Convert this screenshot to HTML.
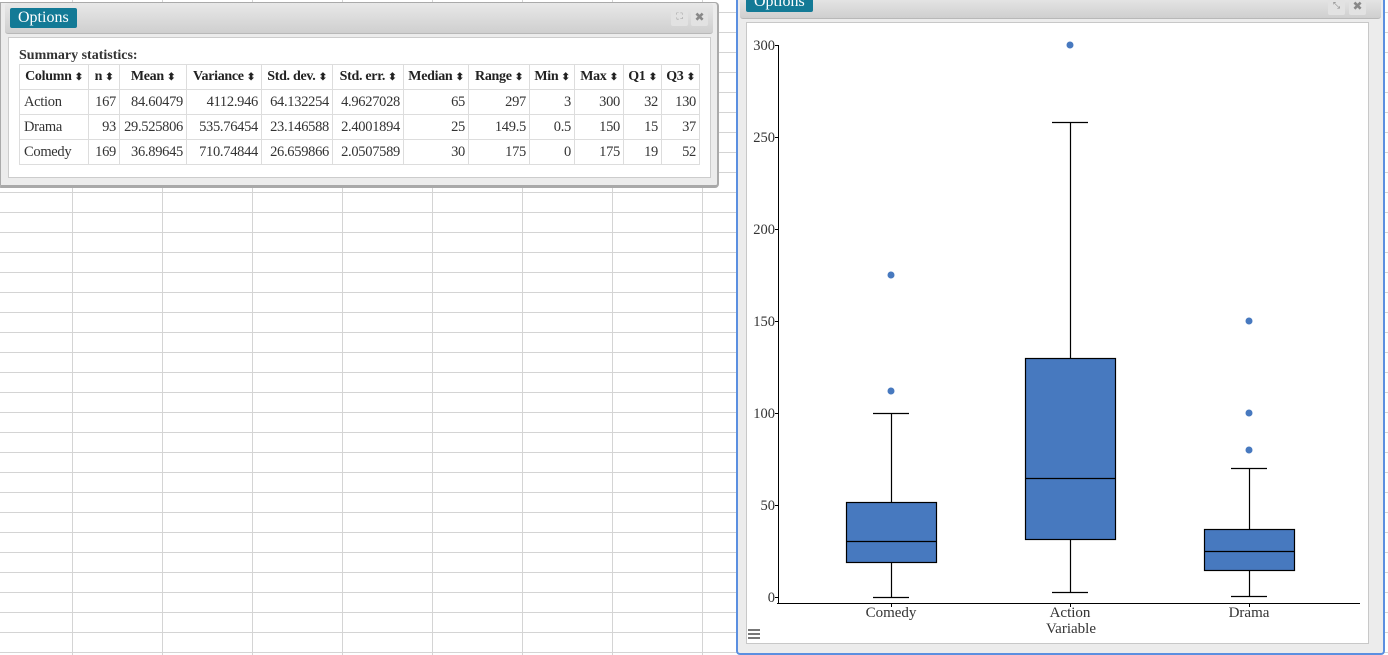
<!DOCTYPE html>
<html><head><style>
body{margin:0;width:1388px;height:655px;overflow:hidden;position:relative;background:#fff;font-family:"Liberation Serif",serif;}
.grid{position:absolute;left:0;top:0;width:1388px;height:655px;
background-image:linear-gradient(to bottom,transparent 12px,#d4d4d4 12px,#d4d4d4 13px,transparent 13px),linear-gradient(to right,transparent 72px,#d4d4d4 72px,#d4d4d4 73px,transparent 73px);
background-size:1388px 20px,90px 655px;}
.panel1{position:absolute;left:0;top:2px;width:716px;height:182px;background:#ececec;border:1px solid #aaa;border-bottom:3px solid #a9a9a9;border-right:2px solid #aaa;border-radius:0 4px 4px 0;}
.hdr{position:absolute;left:4px;top:0;right:4px;height:30px;background:linear-gradient(#e8e8e8,#cfcfcf);border-bottom:1px solid #b8b8b8;border-radius:3px;}
.opt{position:absolute;background:#137a96;color:#fff;font-size:16px;padding:0 8px;height:20px;line-height:20px;border-radius:2px;}
.btn{position:absolute;width:17px;height:17px;background:#e2e2e2;border-radius:2px;color:#888;font-size:12px;text-align:center;line-height:17px;font-family:"DejaVu Sans",sans-serif;font-weight:bold}
.inner{position:absolute;left:7px;top:34px;width:701px;height:139px;background:#fff;border:1px solid #ccc;}
table{position:absolute;left:10px;top:26px;border-collapse:collapse;font-size:14.5px;color:#333;table-layout:fixed;width:681px;letter-spacing:-0.3px}
td,th{border:1px solid #ddd;height:24px;padding:0 3px 0 2px;text-align:right;white-space:nowrap;overflow:hidden}
th{text-align:center;font-weight:bold;color:#222;font-size:14px;padding:0 1px}
td:first-child{text-align:left;padding-left:4px}
.s{font-size:10px;}
</style></head><body>
<div class="grid"></div>
<div class="panel1">
 <div class="hdr"></div>
 <div class="opt" style="left:9px;top:5px">Options</div>
 <div class="btn" style="left:670px;top:6px;font-weight:normal;font-size:9px">⛶</div>
 <div class="btn" style="left:690px;top:6px">✖</div>
 <div class="inner">
  <div style="position:absolute;left:10px;top:10px;font-size:14px;font-weight:bold;color:#333">Summary statistics:</div>
  <table>
   <colgroup><col style="width:69px"><col style="width:31px"><col style="width:67px"><col style="width:75px"><col style="width:71px"><col style="width:71px"><col style="width:65px"><col style="width:61px"><col style="width:45px"><col style="width:49px"><col style="width:38px"><col style="width:38px"></colgroup>
   <tr><th>Column <span class="s">⬍</span></th><th>n <span class="s">⬍</span></th><th>Mean <span class="s">⬍</span></th><th>Variance <span class="s">⬍</span></th><th>Std. dev. <span class="s">⬍</span></th><th>Std. err. <span class="s">⬍</span></th><th>Median <span class="s">⬍</span></th><th>Range <span class="s">⬍</span></th><th>Min <span class="s">⬍</span></th><th>Max <span class="s">⬍</span></th><th>Q1 <span class="s">⬍</span></th><th>Q3 <span class="s">⬍</span></th></tr>
   <tr><td>Action</td><td>167</td><td>84.60479</td><td>4112.946</td><td>64.132254</td><td>4.9627028</td><td>65</td><td>297</td><td>3</td><td>300</td><td>32</td><td>130</td></tr>
   <tr><td>Drama</td><td>93</td><td>29.525806</td><td>535.76454</td><td>23.146588</td><td>2.4001894</td><td>25</td><td>149.5</td><td>0.5</td><td>150</td><td>15</td><td>37</td></tr>
   <tr><td>Comedy</td><td>169</td><td>36.89645</td><td>710.74844</td><td>26.659866</td><td>2.0507589</td><td>30</td><td>175</td><td>0</td><td>175</td><td>19</td><td>52</td></tr>
  </table>
 </div>
</div>
<div style="position:absolute;left:736px;top:-6px;width:645px;height:657px;background:#ececec;border:2px solid #5b8fe0;border-radius:4px;">
 <div class="hdr" style="left:2px;right:2px;height:22px;top:0"></div>
 <div class="opt" style="left:8px;top:-4px">Options</div>
 <div class="btn" style="left:590px;top:2px;font-size:9px;font-weight:normal">⤡</div>
 <div class="btn" style="left:611px;top:2px">✖</div>
 <div style="position:absolute;left:8px;top:26px;width:621px;height:620px;background:#fff;border:1px solid #c8c8c8"></div>
</div>
<svg style="position:absolute;left:0;top:0" width="1388" height="655" font-family="Liberation Serif, serif" font-size="14.5">
<g stroke="#000" stroke-width="1" fill="none">
<line x1="778.5" y1="45" x2="778.5" y2="603"/>
<line x1="777" y1="603.5" x2="1360" y2="603.5"/>
<line x1="775" y1="45.5" x2="778" y2="45.5"/><line x1="775" y1="137.5" x2="778" y2="137.5"/><line x1="775" y1="229.5" x2="778" y2="229.5"/><line x1="775" y1="321.5" x2="778" y2="321.5"/><line x1="775" y1="413.5" x2="778" y2="413.5"/><line x1="775" y1="505.5" x2="778" y2="505.5"/><line x1="775" y1="597.5" x2="778" y2="597.5"/>
<line x1="891.5" y1="603" x2="891.5" y2="607"/><line x1="1070.5" y1="603" x2="1070.5" y2="607"/><line x1="1249.5" y1="603" x2="1249.5" y2="607"/>
</g>
<g fill="#333" text-anchor="end"><text x="775" y="50">300</text><text x="775" y="142">250</text><text x="775" y="234">200</text><text x="775" y="326">150</text><text x="775" y="418">100</text><text x="775" y="510">50</text><text x="775" y="602">0</text></g>
<g fill="#333" text-anchor="middle" font-size="15"><text x="891" y="617">Comedy</text><text x="1070" y="617">Action</text><text x="1249" y="617">Drama</text><text x="1071" y="633">Variable</text></g>
<g stroke="#000" stroke-width="1.2">
<line x1="891.5" y1="597" x2="891.5" y2="413"/><line x1="873" y1="597.5" x2="909" y2="597.5"/><line x1="873" y1="413.5" x2="909" y2="413.5"/>
<rect x="846.5" y="502.5" width="90" height="60" fill="#4779bf"/><line x1="846" y1="541.5" x2="937" y2="541.5"/>
<line x1="1070.5" y1="592" x2="1070.5" y2="122"/><line x1="1052" y1="592.5" x2="1088" y2="592.5"/><line x1="1052" y1="122.5" x2="1088" y2="122.5"/>
<rect x="1025.5" y="358.5" width="90" height="181" fill="#4779bf"/><line x1="1025" y1="478.5" x2="1116" y2="478.5"/>
<line x1="1249.5" y1="596" x2="1249.5" y2="468"/><line x1="1231" y1="596.5" x2="1267" y2="596.5"/><line x1="1231" y1="468.5" x2="1267" y2="468.5"/>
<rect x="1204.5" y="529.5" width="90" height="41" fill="#4779bf"/><line x1="1204" y1="551.5" x2="1295" y2="551.5"/>
</g>
<g fill="#4779bf"><circle cx="891" cy="391" r="3.5"/><circle cx="891" cy="275" r="3.5"/><circle cx="1070" cy="45" r="3.5"/><circle cx="1249" cy="450" r="3.5"/><circle cx="1249" cy="413" r="3.5"/><circle cx="1249" cy="321" r="3.5"/></g>
<g fill="#777"><rect x="748" y="629" width="12" height="2"/><rect x="748" y="633" width="12" height="2"/><rect x="748" y="637" width="12" height="2"/></g>
</svg>
</body></html>
